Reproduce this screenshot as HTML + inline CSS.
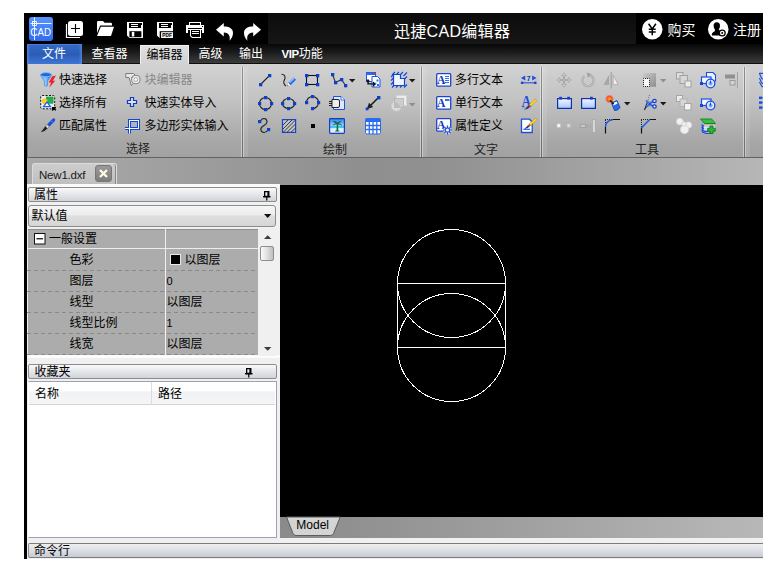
<!DOCTYPE html><html lang="zh-CN"><head><meta charset="utf-8"><title>迅捷CAD编辑器</title><style>
*{box-sizing:border-box;margin:0;padding:0}
html,body{width:780px;height:561px;overflow:hidden;background:#fff}
body{position:relative;font-family:"Liberation Sans","Noto Sans CJK SC",sans-serif;font-size:12px;color:#000}
.a{position:absolute}
.t{position:absolute;white-space:nowrap;line-height:16px;height:16px;font-size:12px}
svg{position:absolute;overflow:visible}
#app{left:24px;top:13px;width:739px;height:545.800px;background:#000;overflow:hidden}
#title{left:0;top:0;width:739px;height:31px;background:linear-gradient(#0c0c0c,#161616)}
#qat{left:0;top:0;width:244px;height:31px;background:#000}
#tabs{left:3px;top:31px;width:736px;height:20px;background:linear-gradient(#070707,#1c1c1c 45%,#3c3c3c);border-bottom:1px solid #0e0e0e}
.tab{position:absolute;top:0;height:20px;line-height:21px;text-align:center;color:#fff;font-weight:400;font-size:12px;white-space:nowrap}
#ribbon{left:3px;top:51px;width:736px;height:94px;background:linear-gradient(#d2d2d2,#c2c2c2 40%,#a6a6a6 85%,#a2a2a2);border-bottom:1px solid #626262;box-shadow:inset 1px 0 0 #7a7a7a}
.sep{position:absolute;top:3px;height:90px;width:1px;background:linear-gradient(#8e8e8e,#6c6c6c);box-shadow:-1px 0 0 rgba(255,255,255,.42),1px 0 0 rgba(255,255,255,.42)}
.sep:after{content:'';position:absolute;left:2px;top:0;width:4px;height:90px;background:rgba(255,255,255,.09)}
.glabel{position:absolute;top:126px;height:16px;line-height:16px;font-size:12px;color:#222;text-align:center;white-space:nowrap}
.dis{color:#888}
.hdr{position:absolute;border:1px solid #8c8c8c;border-radius:2px;background:linear-gradient(#f9f9f9,#e6e8eb 45%,#d0d3da);}
</style></head><body>
<div id="app" class="a">
<div id="title" class="a"></div><div id="qat" class="a"></div>
<svg style="left:5px;top:4px" width="24" height="24" viewBox="0 0 24 24"><defs><linearGradient id="gc" x1="0" y1="0" x2="0" y2="1"><stop offset="0" stop-color="#5a94ff"/><stop offset="1" stop-color="#2f6cf0"/></linearGradient></defs><rect x="0" y="0" width="24" height="24" rx="3" fill="url(#gc)"/><path d="M1.5 6.5H22.500M5.500 0.500V23" stroke="#fff" stroke-width="1" fill="none" opacity=".9"/><rect x="3.500" y="4.500" width="4" height="4" fill="none" stroke="#fff" stroke-width=".8"/><text x="11.700" y="18.800" font-family="Liberation Sans,sans-serif" font-size="11.800" fill="#fff" text-anchor="middle" textLength="20.700" lengthAdjust="spacingAndGlyphs">CAD</text></svg>
<svg style="left:41px;top:8px" width="18" height="18" viewBox="0 0 18 18"><path d="M1.500 3V16.500H15" fill="none" stroke="#fff" stroke-width="1.200"/><rect x="3" y="0" width="15" height="15" rx="2.500" fill="#fff"/><path d="M10.500 3V12M6 7.500H15" stroke="#000" stroke-width="1.100"/></svg>
<svg style="left:72px;top:8px" width="18" height="16" viewBox="0 0 18 16"><path d="M1 1.200Q1 0 2.200 0H7L8.500 1.800H14.800Q16 1.800 16 3V4.500H4.200L1 12Z" fill="#fff"/><path d="M4.800 5.800H18L15 15H1Z" fill="#fff"/></svg>
<svg style="left:103px;top:9px" width="16" height="16" viewBox="0 0 16 16"><path d="M0 0H16V16H2.600L0 13.400Z" fill="#fff"/><g shape-rendering="crispEdges"><rect x="2" y="1" width="11.500" height="5" fill="#000"/><rect x="4" y="2" width="7" height="1" fill="#fff"/><rect x="4" y="4" width="7" height="1" fill="#fff"/><rect x="14" y="1" width="1" height="2" fill="#000"/></g><rect x="2.400" y="9.200" width="12" height="6" fill="#000"/><rect x="4.800" y="9.900" width="2.500" height="4.600" fill="#fff"/></svg>
<svg style="left:133px;top:9px" width="16" height="16" viewBox="0 0 16 16"><path d="M0 0H16V16H2.600L0 13.400Z" fill="#fff"/><g shape-rendering="crispEdges"><rect x="2" y="1" width="11.500" height="5" fill="#000"/><rect x="4" y="2" width="7" height="1" fill="#fff"/><rect x="4" y="4" width="7" height="1" fill="#fff"/><rect x="14" y="1" width="1" height="2" fill="#000"/></g><rect x="2.700" y="9.200" width="13.300" height="6.800" fill="#000"/><rect x="4.100" y="10.200" width="11.900" height="5.800" fill="#fff"/><rect x="4.900" y="10.900" width="10.300" height="4.300" fill="#e4e4e4"/><text x="10.050" y="15" font-family="Liberation Sans,sans-serif" font-size="5.600" font-weight="bold" fill="#000" text-anchor="middle" textLength="9.600" lengthAdjust="spacingAndGlyphs">PDF</text></svg>
<svg style="left:162px;top:9px" width="18" height="16" viewBox="0 0 18 16"><g shape-rendering="crispEdges"><rect x="3" y="0" width="12" height="3" fill="#fff"/><rect x="4" y="1" width="10" height="2" fill="#000"/><rect x="0" y="3" width="18" height="8" fill="#fff"/><rect x="2" y="6" width="14" height="1" fill="#000"/><rect x="2" y="8" width="14" height="3" fill="#000"/><rect x="16" y="4" width="1" height="1" fill="#000"/></g><path d="M4 8H15V16H6L4 14Z" fill="#fff"/><path d="M5 8H14V15H6.500L5 13.500Z" fill="#000"/><g shape-rendering="crispEdges"><rect x="6" y="9" width="7" height="1" fill="#fff"/><rect x="6" y="11" width="7" height="1" fill="#fff"/></g></svg>
<svg style="left:192px;top:9.8px" width="17" height="18" viewBox="0 0 17 18"><path d="M0 6.700L7.800 0V3.600C13 3.600 17 5.500 17 10C17 13 15.500 15.500 13.600 17.800C14.300 14 13.500 9.600 7.800 9.500V13.400Z" fill="#fff"/></svg>
<svg style="left:219.9px;top:9.8px" width="17" height="18" viewBox="0 0 17 18"><path d="M17 6.700L9.200 0V3.600C4 3.600 0 5.500 0 10C0 13 1.500 15.500 3.400 17.800C2.700 14 3.500 9.600 9.200 9.500V13.400Z" fill="#fff"/></svg>
<div class="t" style="left:370px;top:7.5px;color:#fff;font-size:16px;letter-spacing:.3px;line-height:22px;height:22px">迅捷CAD编辑器</div>
<div class="a" style="left:612px;top:0;width:127px;height:31px;background:#000"></div>
<svg style="left:617.7px;top:5.5px" width="20.5" height="20.5" viewBox="0 0 20.5 20.5"><circle cx="10.250" cy="10.250" r="10.250" fill="#fff"/><path d="M6.600 4.800L10.250 10L13.900 4.800M10.250 10V16.200M6.800 10.300H13.700M6.800 12.900H13.700" stroke="#000" stroke-width="1.500" fill="none"/></svg>
<div class="t" style="left:643.5px;top:6.5px;color:#fff;font-size:14px;line-height:20px;height:20px">购买</div>
<svg style="left:683.6px;top:5.5px" width="20.5" height="20.5" viewBox="0 0 20.5 20.5"><circle cx="10.250" cy="10.250" r="10.250" fill="#fff"/><path d="M8.800 3.200Q12 3.200 12 6.800Q12 9 10.800 10.200Q11 11.500 13.500 12.300V16.500H3.800Q3.500 13.500 6.800 12.300Q7 11.500 6.800 10.200Q5.600 9 5.600 6.800Q5.600 3.200 8.800 3.200Z" fill="#000"/><circle cx="14.200" cy="14" r="3.600" fill="#000"/><circle cx="14.200" cy="14" r="2.300" fill="#fff"/><circle cx="14.200" cy="14" r="1" fill="#000"/></svg>
<div class="t" style="left:709px;top:6.5px;color:#fff;font-size:14px;line-height:20px;height:20px">注册</div>
<div id="tabs" class="a">
<div class="tab" style="left:0px;width:55px;background:linear-gradient(90deg,rgba(95,148,240,.6),rgba(95,148,240,0) 6%,rgba(95,148,240,0) 94%,rgba(95,148,240,.6)),linear-gradient(#3368c4,#2b5db6 50%,#3d76d6);border-top:1px solid #4a7fd8;font-weight:normal;font-size:12px;line-height:19px;text-indent:-1px">文件</div>
<div class="tab" style="left:55px;width:55px">查看器</div>
<div class="tab" style="left:113px;width:49px;color:#000;background:linear-gradient(#e0e0e0,#d2d2d2);border:1px solid #f0f0f0;border-bottom:none;top:0.500px;height:19.500px;line-height:19px">编辑器</div>
<div class="tab" style="left:164px;width:39px">高级</div>
<div class="tab" style="left:205px;width:38px">输出</div>
<div class="tab" style="left:254.5px;width:55px;text-align:left"><span style="font-size:11.500px;letter-spacing:-.4px;font-weight:bold">VIP</span>功能</div>
</div>
<div id="ribbon" class="a">
<svg style="left:13px;top:8px" width="17" height="16" viewBox="0 0 17 16"><defs><linearGradient id="gf" x1="0" y1="0" x2="1" y2="0"><stop offset="0" stop-color="#5aa8f8"/><stop offset=".45" stop-color="#8ccaff"/><stop offset="1" stop-color="#0f58d0"/></linearGradient></defs><path d="M0.200 3Q6 7 11.800 3L7.600 9V13.500Q6 15.300 4.400 13.500V9Z" fill="url(#gf)" stroke="#2a74dc" stroke-width=".5"/><ellipse cx="6" cy="2.700" rx="5.600" ry="2.100" fill="#1f66d2" stroke="#7cc0ff" stroke-width="1"/><path d="M12.300 4.200L16 3.600L12.800 8.800H15.200L9.400 15.400L11 10.500H8.600Z" fill="#f0202c"/></svg>
<div class="t " style="left:32px;top:7.5px;">快速选择</div>
<svg style="left:13px;top:31px" width="17" height="17" viewBox="0 0 17 17"><rect x="0.700" y="0.500" width="14" height="13.300" rx="1.500" fill="#ececec" stroke="#111" stroke-width="1" stroke-dasharray="2 1.400"/><rect x="6.500" y="2" width="6.600" height="6.200" fill="#21b04b" stroke="#0d8a30" stroke-width=".6"/><circle cx="4.900" cy="6.300" r="2.600" fill="#ffd21f" stroke="#e0a800" stroke-width=".5"/><path d="M3.600 11.600L7 6.800L10.400 11.600Z" fill="#fff" stroke="#1a62e8" stroke-width="1.300"/><path d="M12 12H16V13L15.200 13.800L16.300 15L15.500 15.800L14.300 14.700L12 16Z" fill="#000"/></svg>
<div class="t " style="left:32px;top:30.5px;">选择所有</div>
<svg style="left:13px;top:54px" width="17" height="16" viewBox="0 0 17 16"><path d="M12.500 0.800Q14.200 -0.300 15 0.800Q15.800 2 14.500 3.500L9.300 8.800L7 6.500Z" fill="#1d4fd8"/><path d="M11 2.500L13 4.500" stroke="#6a94f4" stroke-width="1"/><path d="M7 6.500L9.300 8.800L7.500 10.500L5.300 8.300Z" fill="#d8d8d8" stroke="#666" stroke-width=".5"/><path d="M5.300 8.300L7.500 10.500Q5 13.500 0.800 14.300Q3.200 11.500 5.300 8.300Z" fill="#222"/></svg>
<div class="t " style="left:32px;top:53.5px;">匹配属性</div>
<svg style="left:98px;top:8px" width="16" height="16" viewBox="0 0 16 16"><path d="M0.800 1.500H8.500L10 3V5.500H6.500L8.200 11.500L6.300 13.500L4 5.500H0.800Z" fill="#e8e8e8" stroke="#7c7c7c" stroke-width="1"/><circle cx="10.800" cy="7.500" r="4.300" fill="#ececec" stroke="#888" stroke-width="1.100"/><circle cx="10.800" cy="7.500" r="1.900" fill="#fafafa" stroke="#9c9c9c" stroke-width=".9"/></svg>
<div class="t dis" style="left:117.5px;top:7.5px;">块编辑器</div>
<svg style="left:99px;top:32px" width="12" height="12" viewBox="0 0 12 12"><path d="M4.500 1.500H7.500V4.500H10.500V7.500H7.500V10.500H4.500V7.500H1.500V4.500H4.500Z" fill="#e4e4e4" stroke="#0f3ac8" stroke-width="1.200"/></svg>
<div class="t " style="left:117.5px;top:30.5px;">快速实体导入</div>
<svg style="left:97px;top:54px" width="17" height="16" viewBox="0 0 17 16"><path d="M5.500 1V15.600M14.500 1V12M4 2.500H16M1 10.500H16" stroke="#1446d6" stroke-width="3" fill="none"/><path d="M5.500 2V15.600M14.500 2V11M5 2.500H15M1 10.500H15" stroke="#f4f6ff" stroke-width="1" fill="none"/></svg>
<div class="t " style="left:117.5px;top:53.5px;">多边形实体输入</div>
<div class="glabel" style="left:91px;width:40px;top:76.6px">选择</div>
<div class="sep" style="left:215px"></div>
<div class="sep" style="left:394px"></div>
<div class="sep" style="left:514px"></div>
<div class="sep" style="left:717px"></div>
<svg style="left:230px;top:8px" width="16" height="16" viewBox="0 0 16 16"><path d="M3.500 12.500L12.500 3.500" stroke="#222" stroke-width="1.100"/><rect x="2" y="11" width="3.3" height="3.3" fill="#0a3fd0"/><rect x="11" y="2" width="3.3" height="3.3" fill="#0a3fd0"/></svg>
<svg style="left:253px;top:8px" width="16" height="16" viewBox="0 0 16 16"><path d="M1.500 2.200Q5.500 2.500 5 6.500Q3 10 4.200 12Q5 13.500 6 14" fill="none" stroke="#222" stroke-width="1.100"/><path d="M8.200 11L13.800 5.500L16 7.800L10.500 13.300Z" fill="#1f66ea"/><path d="M9 10.200L13.800 5.500L14.800 6.500L10 11.200Z" fill="#8cbcff"/><path d="M8.200 11L10.500 13.300L7 14.300Z" fill="#f6f6f6"/><path d="M7.700 12.600L8.700 13.800L6.800 14.400Z" fill="#e8303c"/></svg>
<svg style="left:277px;top:8px" width="16" height="16" viewBox="0 0 16 16"><rect x="2.500" y="3.500" width="11" height="9" fill="none" stroke="#111" stroke-width="1.100"/><rect x="1" y="2" width="3.3" height="3.3" fill="#0a3fd0"/><rect x="12" y="2" width="3.3" height="3.3" fill="#0a3fd0"/><rect x="1" y="11" width="3.3" height="3.3" fill="#0a3fd0"/><rect x="12" y="11" width="3.3" height="3.3" fill="#0a3fd0"/></svg>
<svg style="left:303px;top:8px" width="17" height="16" viewBox="0 0 17 16"><path d="M2.500 2.500L5.500 10.500L11.500 7.500L15.500 13.500" fill="none" stroke="#333" stroke-width="1.100"/><rect x="1" y="1" width="3.3" height="3.3" fill="#0a3fd0"/><rect x="4" y="9" width="3.3" height="3.3" fill="#0a3fd0"/><rect x="10" y="6" width="3.3" height="3.3" fill="#0a3fd0"/><rect x="14" y="12" width="3.3" height="3.3" fill="#0a3fd0"/></svg>
<svg style="left:338px;top:8px" width="16" height="16" viewBox="0 0 16 16"><rect x="1.500" y="0.500" width="9" height="9" fill="#fff" stroke="#1a56e0" stroke-width="1"/><rect x="1.500" y="0.500" width="9" height="2.500" fill="#2a6cf0"/><rect x="8" y="0.500" width="2" height="2" fill="#ee2233"/><path d="M7 4.500H12.500L15 7V15H7Z" fill="#fff" stroke="#1a56e0" stroke-width="1"/><rect x="11.500" y="7.500" width="2" height="2" fill="#2a6cf0"/><rect x="9.500" y="10.500" width="2" height="2" fill="#7aa6ff"/><rect x="12" y="12" width="2" height="2" fill="#2a6cf0"/><path d="M3 7L0.800 9.500H2.300V12.500H8V15L11 12L8 9.500V11.200H3.800V9.500H5.200Z" fill="#111"/></svg>
<svg style="left:364px;top:8px" width="16" height="16" viewBox="0 0 16 16"><path d="M1 3L4 0M5 3L8 0M9 3L12 0M12.500 4L16 0.500M12.500 8L16 4.500M13 15.500L16 12.500M9 15.500L12 12.500M5 15.500L8 12.500M1 15.500L4 12.500M0 12.500L3 9.500M0 8.500L3 5.500M0 5L3 2" stroke="#1446d6" stroke-width="1.100"/><path d="M2.500 2.500H9.500V6.500H13.500V13.500H2.500Z" fill="#f2f6ff" stroke="#1446d6" stroke-width="1.200"/></svg>
<svg style="left:230px;top:31px" width="17" height="17" viewBox="0 0 17 17"><circle cx="8.500" cy="8.500" r="6" fill="none" stroke="#222" stroke-width="1.100"/><rect x="7" y="1" width="3.2" height="3.2" fill="#0a3fd0"/><rect x="7" y="13" width="3.2" height="3.2" fill="#0a3fd0"/><rect x="1" y="7" width="3.2" height="3.2" fill="#0a3fd0"/><rect x="13" y="7" width="3.2" height="3.2" fill="#0a3fd0"/></svg>
<svg style="left:253px;top:31px" width="17" height="17" viewBox="0 0 17 17"><ellipse cx="8.500" cy="8.500" rx="6" ry="5" fill="none" stroke="#222" stroke-width="1.100"/><rect x="7" y="2" width="3.2" height="3.2" fill="#0a3fd0"/><rect x="7" y="12" width="3.2" height="3.2" fill="#0a3fd0"/><rect x="1" y="7" width="3.2" height="3.2" fill="#0a3fd0"/><rect x="13" y="7" width="3.2" height="3.2" fill="#0a3fd0"/></svg>
<svg style="left:277px;top:31px" width="17" height="17" viewBox="0 0 17 17"><path d="M2.500 7.500A6 6 0 1 1 8.500 13.500" fill="none" stroke="#222" stroke-width="1.100"/><rect x="7" y="0" width="3.2" height="3.2" fill="#0a3fd0"/><rect x="1" y="6" width="3.2" height="3.2" fill="#0a3fd0"/><rect x="13" y="6" width="3.2" height="3.2" fill="#0a3fd0"/><rect x="7" y="12" width="3.2" height="3.2" fill="#0a3fd0"/></svg>
<svg style="left:302px;top:32px" width="16" height="16" viewBox="0 0 16 16"><path d="M4.500 0.500H12L15.500 4V13.500H4.500Z" fill="#dfe8ff" stroke="#1a56e0" stroke-width="1"/><path d="M12 0.500V4H15.500" fill="#fff" stroke="#1a56e0" stroke-width=".8"/><path d="M3 3.500H9Q10.500 3.500 10.500 5V10Q10.500 11.500 9 11.500H3Z" fill="#eee" stroke="#222" stroke-width="1"/><path d="M0 5.500H3M0 7.500H3M0 9.500H3" stroke="#222" stroke-width="1"/></svg>
<svg style="left:338px;top:31px" width="16" height="16" viewBox="0 0 16 16"><path d="M13.500 2.500L4 12" stroke="#1a1a1a" stroke-width="1.600"/><path d="M1.800 14.200L4 7.800L8.200 12Z" fill="#222"/><rect x="12" y="1" width="3.4" height="3.4" fill="#0a3fd0"/><rect x="0.7" y="12.5" width="2.8" height="2.8" fill="#0a3fd0"/></svg>
<svg style="left:364px;top:31px" width="16" height="17" viewBox="0 0 16 17"><rect x="5.500" y="0.500" width="10" height="10" fill="#ececec" stroke="#d4d4d4"/><circle cx="5.500" cy="11" r="5" fill="#dcdcdc" stroke="#cfcfcf"/><rect x="3.500" y="3.500" width="9" height="9" fill="#cdcdcd" stroke="#b4b4b4" stroke-width=".8"/><path d="M3.500 12.500V7Q8.500 7.500 9 12.500Z" fill="#bcbcbc"/></svg>
<svg style="left:230px;top:54px" width="16" height="16" viewBox="0 0 16 16"><path d="M3.500 4Q4 0.500 7 0.500Q10 0.700 10 3.800Q10 6 7 7.500Q3.500 9.300 3.800 11.500Q4.200 14.400 7 14.500Q9.500 14.500 11 12" fill="none" stroke="#222" stroke-width="1.100"/><rect x="1" y="2" width="3.2" height="3.2" fill="#0a3fd0"/><rect x="10" y="10" width="3.2" height="3.2" fill="#0a3fd0"/></svg>
<svg style="left:253px;top:54px" width="17" height="16" viewBox="0 0 17 16"><rect x="2.500" y="1.600" width="13.100" height="12.800" fill="#c4c4c4" stroke="#1446d6" stroke-width="1.200"/><path d="M3 7L8 2M3 11L12 2M3 14.500L15.200 2.300M7 14.300L15.200 6.300M11 14.300L15.200 10.300" stroke="#2a2a2a" stroke-width=".9"/></svg>
<svg style="left:277px;top:54px" width="16" height="16" viewBox="0 0 16 16"><rect x="7" y="6" width="4" height="4" fill="#000"/></svg>
<svg style="left:302px;top:54px" width="16" height="16" viewBox="0 0 16 16"><defs><linearGradient id="gi" x1="0" y1="0" x2="0" y2="1"><stop offset="0" stop-color="#2f7df0"/><stop offset=".45" stop-color="#9ad4ff"/><stop offset=".58" stop-color="#28b4e4"/><stop offset=".68" stop-color="#e6f4ff"/><stop offset="1" stop-color="#cfe6ff"/></linearGradient></defs><rect x="0.600" y="0.600" width="14.800" height="14.800" rx=".8" fill="url(#gi)" stroke="#1440c0" stroke-width="1.200"/><path d="M8.300 4.500Q6 1.800 3.200 4Q5.500 3.700 6.800 5.500Q4 5.200 3 8Q5.500 6.200 7.800 6.600L7.500 12.300Q6 12.800 6 13.600H10.600Q10.600 12.800 9.200 12.300L9.200 6.600Q11.600 6.200 13 8.500Q12.600 5.200 9.800 5.500Q11.200 3.700 13.400 4.500Q10.800 1.800 8.300 4.500Z" fill="#0f7048"/></svg>
<svg style="left:338px;top:54px" width="16" height="16" viewBox="0 0 16 16"><rect x="0.500" y="0.500" width="15" height="15.500" rx="1.500" fill="#fff" stroke="#2a6cf0" stroke-width="1"/><rect x="0.500" y="0.500" width="15" height="3.500" fill="#2a6cf0"/><path d="M0.500 7.500H15.500M0.500 11.500H15.500M4.300 3V16M8 3V16M11.800 3V16" stroke="#2a6cf0" stroke-width="1.300"/></svg>
<svg style="left:321.7px;top:14.8px" width="6.4" height="3.4" viewBox="0 0 6.4 3.4"><path d="M0 0H6.400L3.200 3.400Z" fill="#1a1a1a"/></svg>
<svg style="left:381.7px;top:14.8px" width="6.4" height="3.4" viewBox="0 0 6.4 3.4"><path d="M0 0H6.400L3.200 3.400Z" fill="#1a1a1a"/></svg>
<svg style="left:381.7px;top:38.5px" width="6.4" height="3.4" viewBox="0 0 6.4 3.4"><path d="M0 0H6.400L3.200 3.400Z" fill="#8e8e8e"/></svg>
<div class="glabel" style="left:288px;width:40px;top:77.5px">绘制</div>
<svg style="left:409px;top:8.7px" width="16" height="16" viewBox="0 0 16 16"><rect x="0.700" y="0.700" width="14" height="12.500" rx="1" fill="#fff" stroke="#1a44d0" stroke-width="1.300"/><text x="5.200" y="11.300" font-family="Liberation Serif,serif" font-weight="bold" font-size="11.500" fill="#1034b0" text-anchor="middle">A</text><path d="M9 3.500H13M9 5.500H13M9 7.500H13M9 9.500H13" stroke="#3a6cf0" stroke-width="1"/></svg>
<div class="t " style="left:428px;top:7.5px;">多行文本</div>
<svg style="left:409px;top:31.8px" width="16" height="16" viewBox="0 0 16 16"><rect x="0.700" y="0.700" width="14" height="12.500" rx="1" fill="#fff" stroke="#1a44d0" stroke-width="1.300"/><text x="5.200" y="11.300" font-family="Liberation Serif,serif" font-weight="bold" font-size="11.500" fill="#1034b0" text-anchor="middle">A</text><rect x="9" y="3" width="4.500" height="2" fill="#3a6cf0"/></svg>
<div class="t " style="left:428px;top:30.5px;">单行文本</div>
<svg style="left:409px;top:54px" width="16" height="16" viewBox="0 0 16 16"><rect x="0.700" y="0.700" width="14" height="12.500" rx="1" fill="#fff" stroke="#1a44d0" stroke-width="1.300"/><text x="5.200" y="11.300" font-family="Liberation Serif,serif" font-weight="bold" font-size="11.500" fill="#1034b0" text-anchor="middle">A</text><g transform="translate(11.500,12)"><circle r="4.300" fill="#e4e4e4" opacity=".85"/><path d="M0 -4.500V4.500M-4.500 0H4.500M-3.200 -3.200L3.200 3.200M-3.200 3.200L3.200 -3.200" stroke="#1a4fe0" stroke-width="1.200"/><circle r="2.500" fill="#1a4fe0"/><circle r="1.600" fill="#f0f4ff"/></g></svg>
<div class="t " style="left:428px;top:53.5px;">属性定义</div>
<svg style="left:493px;top:8px" width="17" height="16" viewBox="0 0 17 16"><path d="M0.900 6.100L5.250 3.600V8.600ZM16.500 6.100L12.150 3.600V8.600Z" fill="#1a4fe0"/><path d="M1.500 10.850H16" stroke="#1446d6" stroke-width="1"/><rect x="0.9" y="9.6" width="2.4" height="2.4" fill="#1446d6"/><rect x="14.1" y="9.6" width="2.4" height="2.4" fill="#1446d6"/><text x="8.700" y="8.600" font-family="Liberation Sans,sans-serif" font-weight="bold" font-size="6.800" fill="#0a2fb0" text-anchor="middle">7</text></svg>
<svg style="left:493px;top:31px" width="17" height="16" viewBox="0 0 17 16"><text x="6.300" y="11.700" font-family="Liberation Serif,serif" font-weight="bold" font-size="16.500" fill="#1a4fe0" text-anchor="middle" textLength="9.600" lengthAdjust="spacingAndGlyphs">A</text><path d="M1.500 13.500Q5.500 11.800 10.500 13.500" stroke="#8ea8ec" stroke-width="1.100" fill="none"/><g transform="translate(5.7,4.2)"><path d="M9.500 0L11 1.500L5 7L3.500 5.500Z" fill="#ffdf1a" stroke="#a88600" stroke-width=".5"/><path d="M3.500 5.500L5 7L4 8L2.600 6.600Z" fill="#e8242c"/><path d="M2.600 6.600L4 8Q2 10 -1.500 10.500Q0.500 8.500 2.600 6.600Z" fill="#303c68"/></g></svg>
<svg style="left:493px;top:54px" width="17" height="16" viewBox="0 0 17 16"><path d="M1.500 1.200H9.500L12.200 4V14.500H1.500Z" fill="#fff" stroke="#1a4fe0" stroke-width="1.300"/><path d="M3.300 11.300H10" stroke="#1a4fe0" stroke-width="1.100"/><g transform="translate(5.7,0.4)"><path d="M9.500 0L11 1.500L5 7L3.500 5.500Z" fill="#ffdf1a" stroke="#a88600" stroke-width=".5"/><path d="M3.500 5.500L5 7L4 8L2.600 6.600Z" fill="#e8242c"/><path d="M2.600 6.600L4 8Q2 10 -1.500 10.500Q0.500 8.500 2.600 6.600Z" fill="#303c68"/></g></svg>
<div class="glabel" style="left:439px;width:40px;top:77.5px">文字</div>
<svg style="left:529px;top:7.8px" width="16" height="16" viewBox="0 0 16 16"><path transform="translate(.4,.4) scale(.95)" d="M8 0.500L10.500 3.500H8.500V7.500H12.500V5.500L15.500 8L12.500 10.500V8.500H8.500V12.500H10.500L8 15.500L5.500 12.500H7.500V8.500H3.500V10.500L0.500 8L3.500 5.500V7.500H7.500V3.500H5.500Z" fill="#d4d4d4" stroke="#9a9a9a" stroke-width=".7"/></svg>
<svg style="left:553px;top:7.7px" width="16" height="16" viewBox="0 0 16 16"><path d="M4.500 4Q1.500 7 3 11Q5 14.500 9 14Q13.500 13 13.500 8.500Q13.500 5 10.500 3.500" fill="none" stroke="#a6a6a6" stroke-width="2.200"/><path d="M4.500 4Q1.500 7 3 11Q5 14.500 9 14Q13.500 13 13.500 8.500Q13.500 5 10.500 3.500" fill="none" stroke="#c8c8c8" stroke-width="1"/><path d="M6.500 0.500L11.500 2L8 6Z" fill="#a2a2a2"/></svg>
<svg style="left:576.3px;top:8px" width="16" height="17" viewBox="0 0 16 17"><path d="M6.200 2.500V13H0.500Z" fill="#a8a8a8"/><path d="M10.200 3V12.700H15.200Z" fill="#f0f0f0" stroke="#a4a4a4" stroke-width=".8"/><path d="M8.200 0V16.500" stroke="#999" stroke-width="1"/></svg>
<svg style="left:614px;top:8px" width="16" height="16" viewBox="0 0 16 16"><defs><linearGradient id="gs" x1="0" y1="0" x2="1" y2="1"><stop offset="0" stop-color="#cacaca"/><stop offset="1" stop-color="#8e8e8e"/></linearGradient></defs><rect x="2" y="1" width="13" height="13.800" fill="url(#gs)"/><rect x="2.500" y="6.500" width="6" height="8" fill="#fafafa" stroke="#222" stroke-width="1" stroke-dasharray="1 1" stroke-dashoffset=".5"/></svg>
<svg style="left:649px;top:8px" width="16" height="16" viewBox="0 0 16 16"><rect x="0.500" y="0.500" width="6.500" height="6.500" fill="#dedede" stroke="#a2a2a2"/><rect x="4" y="3.500" width="7.500" height="8" fill="#d6d6d6" stroke="#a2a2a2"/><rect x="9" y="9" width="6" height="6" fill="#ececec" stroke="#a2a2a2"/></svg>
<svg style="left:673px;top:8px" width="17" height="17" viewBox="0 0 17 17"><path d="M6.500 0.500H13L15.500 3V9H6.500Z" fill="#eef3ff" stroke="#1a4fe0" stroke-width="1.100"/><rect x="1.500" y="5" width="9.500" height="6.500" fill="#f6f9ff" stroke="#1a4fe0" stroke-width="1.200"/><rect x="0" y="10" width="3" height="3" fill="#1446d6"/><circle cx="10.5" cy="11.5" r="4.300" fill="#dfe9ff" stroke="#1a4fe0" stroke-width="1.300"/><circle cx="10.5" cy="11.5" r="2" fill="#7ea2f4"/><path d="M10.5 11.5V8.5" stroke="#1a4fe0" stroke-width="1"/></svg>
<svg style="left:697px;top:8px" width="16" height="16" viewBox="0 0 16 16"><rect x="1" y="2.500" width="10" height="4" fill="#909090"/><rect x="6" y="8.500" width="5" height="4.500" fill="#d4d4d4" stroke="#9a9a9a"/><path d="M13.500 0V16" stroke="#a0a0a0" stroke-width="1"/><path d="M14.500 0V16" stroke="#d0d0d0" stroke-width="1"/></svg>
<svg style="left:529px;top:31px" width="17" height="16" viewBox="0 0 17 16"><defs><linearGradient id="gl" x1="0" y1="0" x2="0" y2="1"><stop offset="0" stop-color="#f4f8ff"/><stop offset="1" stop-color="#a8c4ff"/></linearGradient></defs><rect x="1.600" y="3.600" width="13.800" height="9.800" fill="url(#gl)" stroke="#0e32a8" stroke-width="1.200"/><rect x="3.2" y="1.8" width="2.8" height="2.8" fill="#1440c8"/><rect x="11.2" y="1.8" width="2.8" height="2.8" fill="#1440c8"/></svg>
<svg style="left:553px;top:31px" width="17" height="16" viewBox="0 0 17 16"><rect x="1.600" y="3.600" width="13.800" height="9.800" fill="url(#gl)" stroke="#0e32a8" stroke-width="1.200"/><rect x="10" y="1.8" width="2.8" height="2.8" fill="#1440c8"/></svg>
<svg style="left:578.4px;top:30.7px" width="16" height="17" viewBox="0 0 16 17"><defs><radialGradient id="gp"><stop offset="0" stop-color="#ffb020"/><stop offset=".6" stop-color="#f4502a"/><stop offset="1" stop-color="#f4502a" stop-opacity="0"/></radialGradient></defs><circle cx="4.500" cy="4" r="4.500" fill="url(#gp)"/><path d="M5 5.500L8 8" stroke="#111" stroke-width="1.300"/><path d="M6.500 8L12 5.500L15 12.500Q13 16 9.500 15.500Z" fill="#2a6ce8" stroke="#123ea8" stroke-width=".8"/><path d="M7.500 8.500L11.500 6.500L12.500 8.500L8.500 10.500Z" fill="#fff"/><circle cx="8" cy="8.500" r="1" fill="#111"/></svg>
<svg style="left:615px;top:30.7px" width="16" height="16" viewBox="0 0 16 16"><path d="M7.500 0L5.500 7" stroke="#555" stroke-width=".8" stroke-dasharray="1 1"/><path d="M5.500 7L2.500 15" stroke="#222" stroke-width="1.200"/><path d="M4 5.500L11 11.500M4 12.500L11 6" stroke="#1a4fe0" stroke-width="1.500"/><path d="M4 7H9M4 11H9" stroke="#5c86f0" stroke-width="1"/><circle cx="12.500" cy="6" r="1.700" fill="#dfe9ff" stroke="#1440c8" stroke-width="1.200"/><circle cx="12.500" cy="11.500" r="1.700" fill="#dfe9ff" stroke="#1440c8" stroke-width="1.200"/></svg>
<svg style="left:649px;top:31px" width="16" height="16" viewBox="0 0 16 16"><rect x="0.500" y="0.500" width="6" height="6" fill="#eeeeee" stroke="#a4a4a4"/><rect x="4" y="4" width="7" height="7.500" fill="#d6d6d6" stroke="#b0b0b0"/><rect x="8.500" y="8.500" width="6.500" height="6.500" fill="#f4f4f4" stroke="#a4a4a4"/></svg>
<svg style="left:673px;top:34px" width="17" height="13" viewBox="0 0 17 13"><rect x="1.500" y="1" width="9.500" height="6.500" fill="#f6f9ff" stroke="#1a4fe0" stroke-width="1.200"/><rect x="0" y="6" width="3" height="3" fill="#1446d6"/><circle cx="10.5" cy="7.5" r="4.300" fill="#dfe9ff" stroke="#1a4fe0" stroke-width="1.300"/><circle cx="10.5" cy="7.5" r="2" fill="#7ea2f4"/><path d="M10.5 7.5V4.5" stroke="#1a4fe0" stroke-width="1"/></svg>
<svg style="left:529px;top:54px" width="16" height="16" viewBox="0 0 16 16"><rect x="1" y="5.800" width="3.600" height="3.600" fill="#f8f8f8" stroke="#bcbcbc" stroke-width=".6"/><rect x="11" y="5.800" width="3.600" height="3.600" fill="#dadada" stroke="#b4b4b4" stroke-width=".6"/><path d="M6 7.600H10.500" stroke="#b8b8b8" stroke-width="1" stroke-dasharray="1 1"/></svg>
<svg style="left:553px;top:54px" width="16" height="16" viewBox="0 0 16 16"><rect x="0.300" y="6.300" width="5" height="3.200" fill="#c8c8c8" stroke="#9c9c9c" stroke-width=".8"/><path d="M6 7H12M6 9H12" stroke="#9c9c9c" stroke-width="1" stroke-dasharray="1 1"/><rect x="12.500" y="1.700" width="2.800" height="13" fill="#d8d8d8" stroke="#a6a6a6" stroke-width=".7"/></svg>
<svg style="left:577px;top:54px" width="16" height="16" viewBox="0 0 16 16"><path d="M1 1.500H8M1.500 2V8" stroke="#222" stroke-width="1" stroke-dasharray="1 1"/><path d="M8.500 1.500H16M1.500 8.500V15.500" stroke="#111" stroke-width="1.200"/><path d="M1.500 8.800Q2 2.300 8.800 1.700" fill="none" stroke="#1a5ce8" stroke-width="1.400"/></svg>
<svg style="left:613px;top:54px" width="16" height="16" viewBox="0 0 16 16"><path d="M1 1.500H9M1.500 2V9" stroke="#222" stroke-width="1" stroke-dasharray="1 1"/><path d="M9.500 1.500H16M1.500 9.500V15.500" stroke="#111" stroke-width="1.200"/><path d="M1.500 9.800L9.500 1.700" fill="none" stroke="#1a5ce8" stroke-width="1.500"/></svg>
<svg style="left:649px;top:54px" width="16" height="16" viewBox="0 0 16 16"><g fill="#f0f0f0" stroke="#c8c8c8" stroke-width=".6"><circle cx="3.800" cy="3.500" r="3.500"/><circle cx="12.500" cy="7" r="3.300"/><circle cx="8.500" cy="11.500" r="4.300"/><circle cx="8" cy="6" r="2.200"/></g><path d="M10.500 1L13 3.500M13 1L10.500 3.500" stroke="#bdbdbd" stroke-width=".9"/></svg>
<svg style="left:673px;top:54px" width="17" height="16" viewBox="0 0 17 16"><path d="M2.500 8V14L6 15.500H13" fill="none" stroke="#1a4fe0" stroke-width="1.200"/><path d="M1.500 6.500L4.500 8.500H14.500M1.500 9L4.500 11H9M1.500 11.500L4.500 13.500H8" fill="none" stroke="#1a4fe0" stroke-width="1.100"/><path d="M4 7.500H15V12H4Z" fill="#fff" opacity=".7"/><path d="M0.500 1H11.500L15.500 5.500H4.500Z" fill="#3dbb48" stroke="#168a22" stroke-width="1"/><path d="M10 8H13V10.200H15.200V13.200H13V15.500H10V13.200H7.800V10.200H10Z" fill="#25b832" stroke="#0e7a1a" stroke-width=".9"/></svg>
<svg style="left:633px;top:15px" width="6.4" height="3.4" viewBox="0 0 6.4 3.4"><path d="M0 0H6.400L3.200 3.400Z" fill="#8e8e8e"/></svg>
<svg style="left:597px;top:38px" width="6.4" height="3.4" viewBox="0 0 6.4 3.4"><path d="M0 0H6.400L3.200 3.400Z" fill="#1a1a1a"/></svg>
<svg style="left:633.3px;top:38px" width="6.4" height="3.4" viewBox="0 0 6.4 3.4"><path d="M0 0H6.400L3.200 3.400Z" fill="#1a1a1a"/></svg>
<div class="glabel" style="left:600px;width:40px;top:77.5px">工具</div>
<svg style="left:730px;top:8px" width="6" height="17" viewBox="0 0 6 17"><path d="M2 1.400H6M2.400 1.500L4.800 6.500L6 7.200M2.400 6L4.800 11L6 11.700M2.400 10L4.800 14.300L6 15" fill="none" stroke="#1a4fe0" stroke-width="1.100"/></svg>
<svg style="left:730px;top:32px" width="6" height="14" viewBox="0 0 6 14"><g fill="#fff" stroke="#1a4fe0" stroke-width="1"><rect x="2.500" y="1.100" width="2" height="1.400"/><rect x="2.500" y="5.900" width="2" height="1.400"/><rect x="2.500" y="10.900" width="2" height="1.400"/></g><path d="M5 0.900L6 1.800L5 2.700ZM5 5.700L6 6.600L5 7.500ZM5 10.700L6 11.600L5 12.500Z" fill="#1a4fe0"/></svg>
</div>
<div class="a" style="left:3px;top:145px;width:736px;height:27px;background:linear-gradient(90deg,#a9a9a9,#a2a2a2 15%,#8f8f8f 45%,#909090 55%,#b6b6b6)"></div>
<div class="a" style="left:8px;top:149.5px;width:85px;height:22px;border:1px solid #dcdcdc;border-bottom:none;border-radius:3px 3px 0 0;box-shadow:inset -1px 0 0 #858585;background:linear-gradient(#cdcdcd,#bebebe)"></div>
<div class="t" style="left:15px;top:154px;color:#1a1a1a;font-size:11.500px;letter-spacing:-.2px">New1.dxf</div>
<div class="a" style="left:71px;top:152px;width:17px;height:17px;border:1px solid #777;border-radius:3px;background:linear-gradient(#999,#7d7d7d)"></div>
<svg style="left:75px;top:156px" width="9" height="9" viewBox="0 0 9 9"><path d="M1 1L8 8M8 1L1 8" stroke="#fffbe0" stroke-width="2.400"/></svg>
<div class="a" style="left:3px;top:171px;width:253px;height:360px;background:#f0f0f0"></div>
<div class="a" style="left:3px;top:171px;width:253px;height:3px;background:#fafafa"></div>
<div class="hdr" style="left:4px;top:174px;width:249px;height:15px"></div>
<div class="t " style="left:10px;top:173.5px;">属性</div>
<svg style="left:238.5px;top:178px" width="8" height="10" viewBox="0 0 8 10"><path d="M1.650 0.650H5.800V5.500H1.650Z" fill="none" stroke="#000" stroke-width="1.300"/><path d="M5.200 0.500V5.500" stroke="#000" stroke-width="1.600"/><path d="M0 5.700H7.500" stroke="#000" stroke-width="1.400"/><path d="M3.750 6V9.600" stroke="#000" stroke-width="1.200"/></svg>
<div class="hdr" style="left:4px;top:191.5px;width:248px;height:22px;border-radius:3px;background:linear-gradient(#f6f6f6,#ececec 45%,#dedede 50%,#d6d6d6)"></div>
<div class="t " style="left:7.5px;top:194.5px;">默认值</div>
<svg style="left:239.7px;top:200.8px" width="7.4" height="4" viewBox="0 0 7.4 4"><path d="M0 0H7.400L3.700 3.900Z" fill="#111"/></svg>
<div class="a" style="left:4px;top:215.5px;width:230px;height:127px;background:#acacac;border-top:1px solid #8e8e8e"></div>
<div class="a" style="left:4px;top:235px;width:230px;height:1px;background:#ececec"></div>
<div class="a" style="left:140.7px;top:215.5px;width:1.500px;height:127px;background:#f0f0f0"></div>
<div class="a" style="left:3px;top:257px;width:230px;height:1px;background:repeating-linear-gradient(90deg,#8a8a8a 0 4px,transparent 4px 7px)"></div>
<div class="a" style="left:3px;top:278px;width:230px;height:1px;background:repeating-linear-gradient(90deg,#8a8a8a 0 4px,transparent 4px 7px)"></div>
<div class="a" style="left:3px;top:299px;width:230px;height:1px;background:repeating-linear-gradient(90deg,#8a8a8a 0 4px,transparent 4px 7px)"></div>
<div class="a" style="left:3px;top:320px;width:230px;height:1px;background:repeating-linear-gradient(90deg,#8a8a8a 0 4px,transparent 4px 7px)"></div>
<div class="a" style="left:3px;top:341px;width:230px;height:1px;background:repeating-linear-gradient(90deg,#8a8a8a 0 4px,transparent 4px 7px)"></div>
<div class="a" style="left:3px;top:342px;width:253px;height:3px;background:#fcfcfc"></div>
<svg style="left:10px;top:220px" width="12" height="12" viewBox="0 0 12 12"><rect x="0.500" y="0.500" width="10.500" height="10.500" fill="#fff" stroke="#111" stroke-width="1"/><path d="M2.500 5.750H9" stroke="#000" stroke-width="1.200"/></svg>
<div class="t " style="left:25px;top:218px;">一般设置</div>
<div class="t " style="left:45.5px;top:239px;">色彩</div>
<div class="a" style="left:146px;top:241px;width:11px;height:11px;background:#000;border:1px solid #e8e8e8"></div>
<div class="t " style="left:160.5px;top:239px;">以图层</div>
<div class="t " style="left:45.5px;top:260px;">图层</div>
<div class="t " style="left:142.5px;top:260px;font-size:11px">0</div>
<div class="t " style="left:45.5px;top:281px;">线型</div>
<div class="t " style="left:142.5px;top:281px;">以图层</div>
<div class="t " style="left:45.5px;top:302px;">线型比例</div>
<div class="t " style="left:142.5px;top:302px;font-size:11px">1</div>
<div class="t " style="left:45.5px;top:323px;">线宽</div>
<div class="t " style="left:142.5px;top:323px;">以图层</div>
<div class="a" style="left:233.5px;top:215.5px;width:18px;height:127px;background:#f0f0f0"></div>
<svg style="left:239.7px;top:221.8px" width="7.4" height="4" viewBox="0 0 7.4 4"><path d="M0 4H7.400L3.700 0.300Z" fill="#3c3c3c"/></svg>
<svg style="left:240px;top:333.5px" width="7.4" height="4" viewBox="0 0 7.4 4"><path d="M0 0H7.400L3.700 3.700Z" fill="#3c3c3c"/></svg>
<div class="a" style="left:235.5px;top:232.8px;width:14.500px;height:14.800px;border:1px solid #8e8e8e;border-radius:2px;background:linear-gradient(90deg,#fafafa,#e2e2e2 45%,#bebebe)"></div>
<div class="hdr" style="left:4px;top:351px;width:249px;height:15px"></div>
<div class="t " style="left:10.5px;top:350.5px;">收藏夹</div>
<svg style="left:221px;top:354.5px" width="8" height="10" viewBox="0 0 8 10"><path d="M1.650 0.650H5.800V5.500H1.650Z" fill="none" stroke="#000" stroke-width="1.300"/><path d="M5.200 0.500V5.500" stroke="#000" stroke-width="1.600"/><path d="M0 5.700H7.500" stroke="#000" stroke-width="1.400"/><path d="M3.750 6V9.600" stroke="#000" stroke-width="1.200"/></svg>
<div class="a" style="left:4px;top:367.5px;width:249px;height:157px;background:#fff;border:1px solid #9aa3b4;border-left-color:#fff"></div>
<div class="a" style="left:5px;top:368.5px;width:245.500px;height:23px;background:linear-gradient(#fff,#fff 40%,#f1f2f4 45%,#f4f5f7);border-bottom:1px solid #d4d4d4"></div>
<div class="a" style="left:126.5px;top:368.5px;width:1px;height:23px;background:#dcdcdc"></div>
<div class="t " style="left:11px;top:373px;">名称</div>
<div class="t " style="left:134px;top:373px;">路径</div>
<div class="a" style="left:256px;top:172px;width:484px;height:332px;background:#000"></div>
<svg style="left:256px;top:172px" width="484" height="331" viewBox="280 185 484 331" fill="none" stroke="#fff" stroke-width="1" shape-rendering="crispEdges"><circle cx="451.5" cy="283.5" r="54"/><circle cx="451.5" cy="347.5" r="54"/><rect x="397.5" y="283.5" width="108" height="64"/></svg>
<div class="a" style="left:256px;top:504px;width:484px;height:20.500px;background:linear-gradient(90deg,#8a8a8a,#999 35%,#b8b8b8)"></div>
<svg style="left:261.5px;top:503.5px" width="56" height="20" viewBox="0 0 56 20"><path d="M0.500 0L7 16.500Q7.800 18.500 10 18.500H44.500Q46.700 18.500 47.500 16.500L54.200 0Z" fill="#d4d4d4" stroke="#5c5c5c" stroke-width="1"/></svg>
<div class="t" style="left:272.3px;top:504px;font-size:12px">Model</div>
<div class="a" style="left:3px;top:524.5px;width:736px;height:21px;background:#f0f0f0"></div>
<div class="hdr" style="left:4px;top:530.4px;width:760px;height:14.700px;border-color:#7c7c7c #8c8c8c;background:linear-gradient(#efefef,#dcdfe4 50%,#c6cad3)"></div>
<div class="t " style="left:10px;top:529.6px;">命令行</div>
</div></body></html>
